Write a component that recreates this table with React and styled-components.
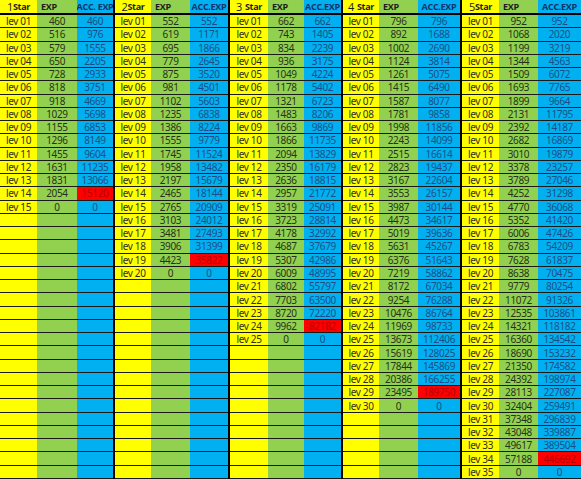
import React from "react";
import styled, { createGlobalStyle } from "styled-components";

const GlobalStyle = createGlobalStyle`
  html, body { margin: 0; padding: 0; background: #ffffff; }
  body { font-family: "Noto Sans", "Liberation Sans", sans-serif; }
`;

const YELLOW = "#ffff00";
const GREEN = "#92d050";
const BLUE = "#00b0f0";
const RED = "#ff0000";

const Sheet = styled.div`
  display: flex;
  width: 581px;
  height: 479px;
  overflow: hidden;
`;

const Group = styled.div`
  display: grid;
  grid-template-columns: ${(p) => p.$cols};
  grid-template-rows: 15px repeat(35, 1fr);
  height: 479px;
  border-left: ${(p) => (p.$first ? "none" : "2px solid #000")};
  flex: none;
`;

const HeadCell = styled.div`
  background: ${(p) => p.$bg};
  border-bottom: 2px solid #000;
  display: flex;
  align-items: center;
  justify-content: ${(p) => p.$align || "center"};
  padding-left: ${(p) => (p.$align === "flex-start" ? "4px" : "0")};
  font-family: "Open Sans", "Noto Sans", sans-serif;
  font-weight: 700;
  font-size: 9px;
  letter-spacing: -0.3px;
  color: ${(p) => p.$color || "#1c1c1c"};
  white-space: nowrap;
  overflow: hidden;
  line-height: 1;
`;

const StarNum = styled.span`
  font-weight: 400;
  font-size: 11px;
  margin-right: ${(p) => (p.$space ? "3px" : "0")};
`;

const Cell = styled.div`
  background: ${(p) => p.$bg};
  border-bottom: 1px solid #1a1a1a;
  display: flex;
  align-items: center;
  justify-content: center;
  font-size: 10px;
  letter-spacing: -0.35px;
  color: ${(p) => p.$color || "#2a2a2a"};
  white-space: nowrap;
  overflow: hidden;
  line-height: 1;
`;

const groups = [
  {
    n: "1",
    space: false,
    acc: "ACC. EXP",
    cols: "37px 40px 36px",
    exp: [460, 516, 579, 650, 728, 818, 918, 1029, 1155, 1296, 1455, 1631, 1831, 2054],
  },
  {
    n: "2",
    space: false,
    acc: "ACC.EXP",
    cols: "36px 39px 38px",
    exp: [552, 619, 695, 779, 875, 981, 1102, 1235, 1386, 1555, 1745, 1958, 2197, 2465, 2765, 3103, 3481, 3906, 4423],
  },
  {
    n: "3",
    space: true,
    acc: "ACC.EXP",
    cols: "38px 36px 37px",
    exp: [662, 743, 834, 936, 1049, 1178, 1321, 1483, 1663, 1866, 2094, 2350, 2636, 2957, 3319, 3723, 4178, 4687, 5307, 6009, 6802, 7703, 8720, 9962],
  },
  {
    n: "4",
    space: true,
    acc: "ACC.EXP",
    cols: "36px 39px 42px",
    exp: [796, 892, 1002, 1124, 1261, 1415, 1587, 1781, 1998, 2243, 2515, 2823, 3167, 3553, 3987, 4473, 5019, 5631, 6376, 7219, 8172, 9254, 10476, 11969, 13673, 15619, 17844, 20386, 23495],
  },
  {
    n: "5",
    space: false,
    acc: "ACC.EXP",
    cols: "37px 39px 43px",
    exp: [952, 1068, 1199, 1344, 1509, 1693, 1899, 2131, 2392, 2682, 3010, 3378, 3789, 4252, 4770, 5352, 6006, 6783, 7628, 8638, 9779, 11072, 12535, 14321, 16360, 18690, 21350, 24392, 28113, 32404, 37348, 43048, 49617, 57188],
  },
];

function buildRows(exp) {
  let acc = 0;
  const rows = exp.map((e, i) => {
    acc += e;
    return { lev: i + 1, exp: e, acc, last: i === exp.length - 1 };
  });
  rows.push({ lev: exp.length + 1, exp: 0, acc: 0, last: false });
  while (rows.length < 35) rows.push(null);
  return rows;
}

const pad = (n) => (n < 10 ? `0${n}` : `${n}`);

export default function App() {
  return (
    <>
      <GlobalStyle />
      <Sheet>
        {groups.map((g, gi) => (
          <Group key={g.n} $cols={g.cols} $first={gi === 0}>
            <HeadCell $bg={YELLOW}>
              <StarNum $space={g.space}>{g.n}</StarNum>Star
            </HeadCell>
            <HeadCell $bg={GREEN} $align="flex-start">EXP</HeadCell>
            <HeadCell $bg={BLUE} $color="#13306a">{g.acc}</HeadCell>
            {buildRows(g.exp).map((r, ri) =>
              r ? (
                <React.Fragment key={ri}>
                  <Cell $bg={YELLOW} $color="#303020">lev {pad(r.lev)}</Cell>
                  <Cell $bg={GREEN} $color="#26331a">{r.exp}</Cell>
                  <Cell $bg={r.last ? RED : BLUE} $color={r.last ? "#b80000" : "#1d4f86"}>
                    {r.acc}
                  </Cell>
                </React.Fragment>
              ) : (
                <React.Fragment key={ri}>
                  <Cell $bg={YELLOW} />
                  <Cell $bg={GREEN} />
                  <Cell $bg={BLUE} />
                </React.Fragment>
              )
            )}
          </Group>
        ))}
      </Sheet>
    </>
  );
}
